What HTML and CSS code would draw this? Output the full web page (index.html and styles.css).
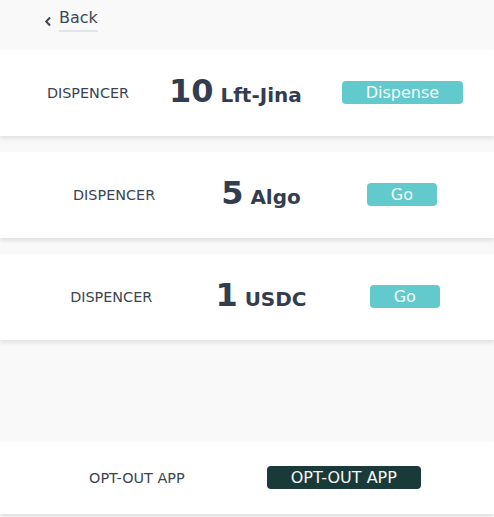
FILE: index.html
```html
<!DOCTYPE html>
<html lang="en">
<head>
<meta charset="utf-8">
<title>Dispencer</title>
<link rel="stylesheet" href="styles.css">
</head>
<body>
<div class="page">
  <header class="top">
    <a class="back" href="#">
      <svg class="chev" width="8" height="11" viewBox="0 0 8 11"><path d="M6 1.5 L2.2 5.5 L6 9.5" fill="none" stroke="#3e4756" stroke-width="2"/></svg>
      <span class="back-text">Back</span>
    </a>
  </header>

  <section class="card">
    <div class="row">
      <span class="label">DISPENCER</span>
      <span class="amount"><span class="num">10</span> <span class="unit">Lft-Jina</span></span>
      <button class="btn teal">Dispense</button>
    </div>
  </section>

  <section class="card">
    <div class="row">
      <span class="label">DISPENCER</span>
      <span class="amount"><span class="num">5</span> <span class="unit">Algo</span></span>
      <button class="btn teal">Go</button>
    </div>
  </section>

  <section class="card">
    <div class="row">
      <span class="label">DISPENCER</span>
      <span class="amount"><span class="num">1</span> <span class="unit">USDC</span></span>
      <button class="btn teal">Go</button>
    </div>
  </section>

  <section class="card card-opt">
    <div class="row">
      <span class="label">OPT-OUT APP</span>
      <button class="btn dark">OPT-OUT APP</button>
    </div>
  </section>
</div>
</body>
</html>
```
FILE: styles.css
```css
* { box-sizing: border-box; }
html, body { margin: 0; padding: 0; }
body {
  background: #f9f9f9;
  font-family: "DejaVu Sans", Verdana, sans-serif;
  color: #2d3748;
  width: 494px;
  height: 517px;
  overflow: hidden;
}
.page { display: flex; flex-direction: column; }
.top {
  height: 50px;
  padding: 7px 0 0 44px;
}
.back {
  display: inline-flex;
  align-items: center;
  text-decoration: none;
  color: #3e4756;
  font-size: 16px;
  line-height: 21px;
}
.chev { margin-right: 7px; margin-top: 3px; }
.back-text {
  border-bottom: 2px solid #e3e3ea;
  padding-bottom: 2px;
}
.card {
  background: #fff;
  height: 86px;
  display: flex;
  align-items: center;
  overflow: hidden;
  box-shadow: 0 3px 4px rgba(0,0,0,0.09);
  margin-bottom: 16px;
}
.card-opt {
  height: 72px;
  margin-top: 86px;
}
.row {
  display: flex;
  align-items: center;
  justify-content: space-evenly;
  margin: 0 -9px 0 7px;
  flex: 1;
}
.label {
  font-size: 14.4px;
  color: #3c4454;
  line-height: 20px;
}
.amount {
  font-weight: bold;
  font-size: 20px;
  color: #333d50;
  line-height: 40px;
  white-space: nowrap;
}
.num { font-size: 32px; }
.btn {
  font-family: "DejaVu Sans", Verdana, sans-serif;
  font-size: 16px;
  line-height: 23px;
  height: 23px;
  padding: 0 24px;
  border: 0;
  border-radius: 4px;
  color: #f2fbfb;
  margin-bottom: 2px;
}
.teal { background: #62cacc; }
.dark { background: #1a3a3a; color: #f4f7f7; }
```
